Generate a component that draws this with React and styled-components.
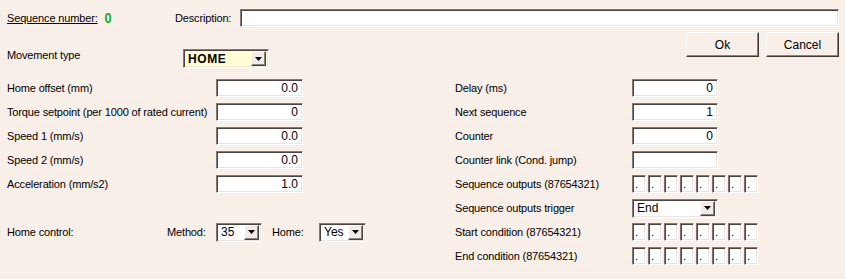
import React from "react";
import styled, { createGlobalStyle } from "styled-components";

const GlobalStyle = createGlobalStyle`
  body {
    margin: 0;
    background: repeating-linear-gradient(
      to bottom,
      #fcf2ec 0px,
      #fcf2ec 1px,
      #f8ebe4 1px,
      #f8ebe4 2px
    );
    font-family: "Liberation Sans", Arial, sans-serif;
    font-size: 11px;
    letter-spacing: -0.15px;
    color: #000;
  }
`;

const leftRows = [
  { label: "Home offset (mm)", value: "0.0" },
  { label: "Torque setpoint (per 1000 of rated current)", value: "0" },
  { label: "Speed 1 (mm/s)", value: "0.0" },
  { label: "Speed 2 (mm/s)", value: "0.0" },
  { label: "Acceleration (mm/s2)", value: "1.0" },
];

const App = () => {
  return (
    <Window>
      <GlobalStyle />
      <HeaderRow>
        <SeqCell>
          <SeqLabel>Sequence number:</SeqLabel>
          <SeqValue>0</SeqValue>
        </SeqCell>
        <DescLabel>Description:</DescLabel>
        <TextBox $width="100%" defaultValue="" />
      </HeaderRow>

      <ActionRow>
        <MovementRow>
          <Label>Movement type</Label>
          <Combo $width={86} $highlight>
            <ComboText $bold>HOME</ComboText>
            <Arrow />
          </Combo>
        </MovementRow>
        <Buttons>
          <Button>Ok</Button>
          <Button>Cancel</Button>
        </Buttons>
      </ActionRow>

      <Columns>
        <Column>
          {leftRows.map((r) => (
            <FieldRow key={r.label} $labelWidth={209}>
              <Label>{r.label}</Label>
              <TextBox $width="87px" defaultValue={r.value} />
            </FieldRow>
          ))}
          <HomeRow>
            <Label>Home control:</Label>
            <Label>Method:</Label>
            <Combo $width={46}>
              <ComboText>35</ComboText>
              <Arrow />
            </Combo>
            <Label>Home:</Label>
            <Combo $width={47}>
              <ComboText>Yes</ComboText>
              <Arrow />
            </Combo>
          </HomeRow>
        </Column>

        <Column>
          <FieldRow $labelWidth={177}>
            <Label>Delay (ms)</Label>
            <TextBox $width="86px" defaultValue="0" />
          </FieldRow>
          <FieldRow $labelWidth={177}>
            <Label>Next sequence</Label>
            <TextBox $width="86px" defaultValue="1" />
          </FieldRow>
          <FieldRow $labelWidth={177}>
            <Label>Counter</Label>
            <TextBox $width="86px" defaultValue="0" />
          </FieldRow>
          <FieldRow $labelWidth={177}>
            <Label>Counter link (Cond. jump)</Label>
            <TextBox $width="86px" defaultValue="" />
          </FieldRow>
          <FieldRow $labelWidth={177}>
            <Label>Sequence outputs (87654321)</Label>
            <Bits />
          </FieldRow>
          <FieldRow $labelWidth={177}>
            <Label>Sequence outputs trigger</Label>
            <Combo $width={86}>
              <ComboText>End</ComboText>
              <Arrow />
            </Combo>
          </FieldRow>
          <FieldRow $labelWidth={177}>
            <Label>Start condition (87654321)</Label>
            <Bits />
          </FieldRow>
          <FieldRow $labelWidth={177}>
            <Label>End condition (87654321)</Label>
            <Bits />
          </FieldRow>
        </Column>
      </Columns>
    </Window>
  );
};

const Bits = () => (
  <BitGroup>
    {Array.from({ length: 8 }).map((_, i) => (
      <Bit key={i}>.</Bit>
    ))}
  </BitGroup>
);

const Arrow = () => (
  <ArrowButton>
    <svg width="7" height="4" viewBox="0 0 7 4">
      <path d="M0 0h7L3.5 4z" fill="#000" />
    </svg>
  </ArrowButton>
);

export default App;

const Window = styled.div`
  width: 845px;
  height: 279px;
  box-sizing: border-box;
  padding: 8px 6px 0 7px;
`;

const HeaderRow = styled.div`
  display: grid;
  grid-template-columns: 168px auto 1fr;
  align-items: center;
  height: 19px;
`;

const SeqCell = styled.div`
  display: flex;
  align-items: center;
`;

const SeqLabel = styled.span`
  text-decoration: underline;
`;

const SeqValue = styled.span`
  margin-left: 6px;
  color: #1aa81a;
  font-size: 15px;
  font-weight: 700;
  transform: scaleX(0.85);
`;

const DescLabel = styled.span`
  margin-right: 9px;
`;

const Label = styled.span`
  line-height: 13px;
  white-space: nowrap;
`;

const sunken = `
  box-sizing: border-box;
  border: 1px solid;
  border-color: #7f7a76 #ffffff #ffffff #7f7a76;
  box-shadow: inset 1px 1px 0 #4a4542, inset -1px -1px 0 #ece6e2;
`;

const TextBox = styled.input`
  ${sunken}
  width: ${(p) => p.$width};
  height: 18px;
  padding: 0 4px 0 3px;
  margin: 0;
  background: #fff;
  font-family: "Liberation Sans", Arial, sans-serif;
  font-size: 12px;
  text-align: right;
  outline: none;
`;

const ActionRow = styled.div`
  display: flex;
  justify-content: space-between;
  align-items: flex-start;
  height: 49px;
`;

const MovementRow = styled.div`
  display: grid;
  grid-template-columns: 176px auto;
  align-items: start;
  margin-top: 22px;
`;

const Buttons = styled.div`
  display: flex;
  gap: 7px;
  margin-top: 5px;
`;

const Button = styled.button`
  box-sizing: border-box;
  width: 73px;
  height: 25px;
  padding: 0;
  background: transparent;
  border: 1px solid;
  border-color: #ffffff #3c3836 #3c3836 #ffffff;
  box-shadow: inset -1px -1px 0 #8a8480;
  font-family: "Liberation Sans", Arial, sans-serif;
  font-size: 12px;
  color: #000;
`;

const Columns = styled.div`
  display: grid;
  grid-template-columns: 448px 1fr;
`;

const Column = styled.div`
  display: flex;
  flex-direction: column;
`;

const FieldRow = styled.div`
  display: grid;
  grid-template-columns: ${(p) => p.$labelWidth}px auto;
  align-items: center;
  height: 24px;
`;

const HomeRow = styled.div`
  display: grid;
  grid-template-columns: 160px 49px 46px 10px 47px 47px;
  align-items: center;
  height: 24px;
  margin-top: 24px;

  & > :nth-child(4) {
    grid-column: 5;
  }
`;

const Combo = styled.div`
  ${sunken}
  display: flex;
  align-items: center;
  width: ${(p) => p.$width}px;
  height: 19px;
  padding: 2px;
  background: ${(p) => (p.$highlight ? "#ffffd2" : "#ffffff")};
`;

const ComboText = styled.span`
  flex: 1;
  padding-left: 2px;
  font-size: 12px;
  font-weight: ${(p) => (p.$bold ? 700 : 400)};
  letter-spacing: ${(p) => (p.$bold ? "0.6px" : "0")};
`;

const ArrowButton = styled.span`
  box-sizing: border-box;
  display: flex;
  align-items: center;
  justify-content: center;
  width: 15px;
  height: 15px;
  background: #f3ebe6;
  border: 1px solid;
  border-color: #ffffff #4a4542 #4a4542 #ffffff;
  box-shadow: inset -1px -1px 0 #8a8480;
`;

const BitGroup = styled.div`
  display: flex;
  gap: 2px;
`;

const Bit = styled.span`
  ${sunken}
  width: 14px;
  height: 18px;
  padding-left: 2px;
  background: #fff;
  font-size: 11px;
  line-height: 16px;
`;
